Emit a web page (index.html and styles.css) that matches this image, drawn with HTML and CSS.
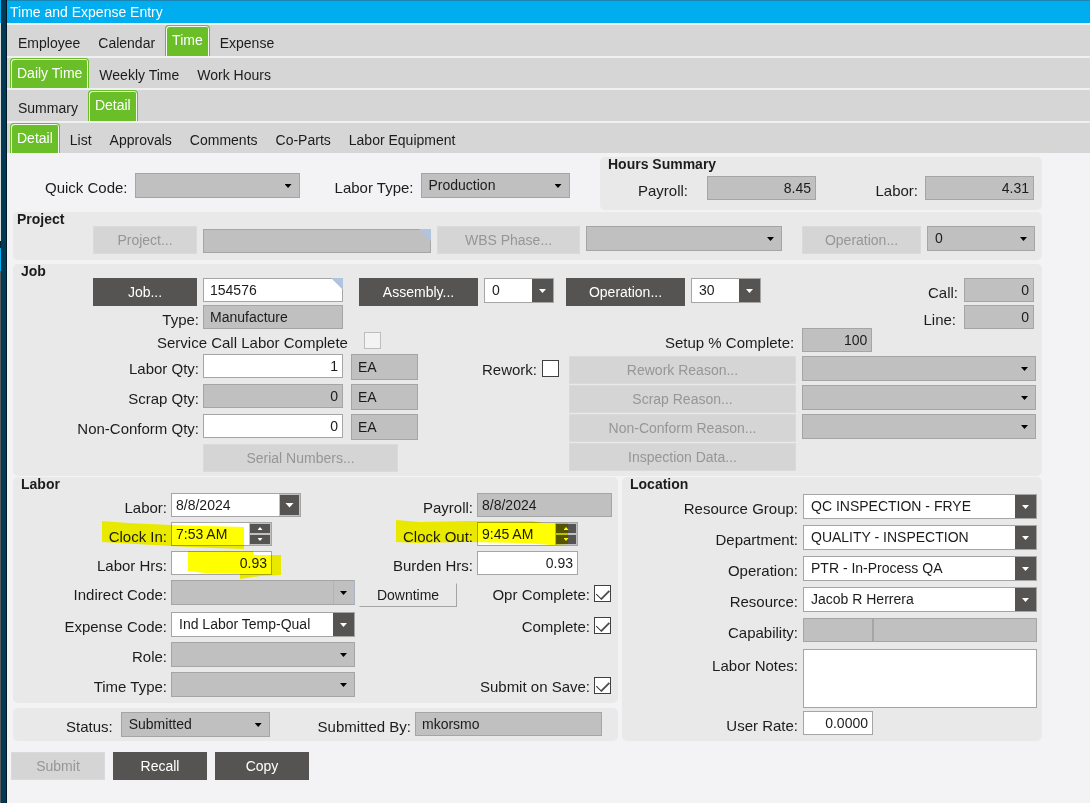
FILE: index.html
```html
<!DOCTYPE html>
<html lang="en">

<head>
    <meta charset="UTF-8">
    <meta name="viewport" content="width=device-width, initial-scale=1.0">
    <title>Time and Expense Entry</title>
    <link rel="stylesheet" href="styles.css">
</head>

<body>
    <div class="edge"></div>
    <div class="window">
        <header class="titlebar">Time and Expense Entry</header>

        <div class="tab-bars">
            <nav class="tabs">
                <button class="tab">Employee</button>
                <button class="tab">Calendar</button>
                <button class="tab active">Time</button>
                <button class="tab">Expense</button>
            </nav>
            <nav class="tabs">
                <button class="tab active">Daily Time</button>
                <button class="tab">Weekly Time</button>
                <button class="tab">Work Hours</button>
            </nav>
            <nav class="tabs">
                <button class="tab">Summary</button>
                <button class="tab active">Detail</button>
            </nav>
            <nav class="tabs">
                <button class="tab active">Detail</button>
                <button class="tab">List</button>
                <button class="tab">Approvals</button>
                <button class="tab">Comments</button>
                <button class="tab">Co-Parts</button>
                <button class="tab">Labor Equipment</button>
            </nav>
        </div>

        <main class="form">
            <!-- Quick code and hours summary -->
            <div class="top-row">
                <div class="quick">
                    <label for="quick-code">Quick Code:</label>
                    <span class="combo w-quick"><select id="quick-code" disabled><option></option></select></span>
                    <label for="labor-type" class="labor-type-label">Labor Type:</label>
                    <span class="combo w-type"><select id="labor-type" disabled><option>Production</option></select></span>
                </div>
                <section class="panel hours">
                    <h2>Hours Summary</h2>
                    <div class="hours-row">
                        <label for="hours-payroll">Payroll:</label>
                        <input type="text" id="hours-payroll" class="num w-hours" value="8.45" readonly>
                        <label for="hours-labor" class="push">Labor:</label>
                        <input type="text" id="hours-labor" class="num w-hours" value="4.31" readonly>
                    </div>
                </section>
            </div>

            <!-- Project -->
            <section class="panel project">
                <h2>Project</h2>
                <div class="project-row">
                    <button class="btn w-btn" disabled>Project...</button>
                    <span class="search grow"><input type="text" aria-label="Project" readonly></span>
                    <button class="btn w-wbs" disabled>WBS Phase...</button>
                    <span class="combo grow wbs-select"><select aria-label="WBS Phase" disabled><option></option></select></span>
                    <button class="btn w-op" disabled>Operation...</button>
                    <span class="combo w-project-op"><select aria-label="Project operation" disabled><option>0</option></select></span>
                </div>
            </section>

            <!-- Job -->
            <section class="panel job">
                <h2>Job</h2>
                <div class="job-row">
                    <button class="btn w-btn">Job...</button>
                    <span class="search w-job"><input type="text" aria-label="Job" value="154576"></span>
                    <button class="btn w-op job-assembly">Assembly...</button>
                    <span class="combo editable w-small"><select aria-label="Assembly"><option>0</option></select></span>
                    <button class="btn w-op job-operation">Operation...</button>
                    <span class="combo editable w-small"><select aria-label="Operation"><option>30</option></select></span>
                    <label for="call" class="push">Call:</label>
                    <input type="text" id="call" class="num w-small" value="0" readonly>
                </div>
                <div class="job-body">
                    <div class="job-left">
                        <div class="qty-row type-row">
                            <label for="job-type">Type:</label>
                            <input type="text" id="job-type" value="Manufacture" readonly>
                        </div>
                        <div class="service-row">
                            <label for="service-complete">Service Call Labor Complete</label>
                            <input type="checkbox" id="service-complete" disabled>
                        </div>
                        <div class="qty-row">
                            <label for="labor-qty">Labor Qty:</label>
                            <input type="text" id="labor-qty" class="num" value="1">
                            <input type="text" aria-label="Labor unit" value="EA" readonly>
                        </div>
                        <div class="qty-row">
                            <label for="scrap-qty">Scrap Qty:</label>
                            <input type="text" id="scrap-qty" class="num" value="0" readonly>
                            <input type="text" aria-label="Scrap unit" value="EA" readonly>
                        </div>
                        <div class="qty-row">
                            <label for="nonconform-qty">Non-Conform Qty:</label>
                            <input type="text" id="nonconform-qty" class="num" value="0">
                            <input type="text" aria-label="Non-conform unit" value="EA" readonly>
                        </div>
                        <button class="btn serial" disabled>Serial Numbers...</button>
                    </div>
                    <div class="rework">
                        <label for="rework">Rework:</label>
                        <input type="checkbox" id="rework">
                    </div>
                    <div class="job-right">
                        <div class="job-extra">
                            <div class="field setup">
                                <label for="setup">Setup % Complete:</label>
                                <input type="text" id="setup" class="num w-small" value="100" readonly>
                            </div>
                            <div class="field">
                                <label for="line">Line:</label>
                                <input type="text" id="line" class="num w-small" value="0" readonly>
                            </div>
                        </div>
                        <div class="reasons">
                            <button class="btn" disabled>Rework Reason...</button>
                            <span class="combo"><select aria-label="Rework reason" disabled><option></option></select></span>
                            <button class="btn" disabled>Scrap Reason...</button>
                            <span class="combo"><select aria-label="Scrap reason" disabled><option></option></select></span>
                            <button class="btn" disabled>Non-Conform Reason...</button>
                            <span class="combo"><select aria-label="Non-conform reason" disabled><option></option></select></span>
                            <button class="btn" disabled>Inspection Data...</button>
                        </div>
                    </div>
                </div>
            </section>

            <div class="bottom">
                <div class="bottom-left">
                    <!-- Labor -->
                    <section class="panel labor">
                        <h2>Labor</h2>
                        <div class="labor-grid">
                            <label for="labor-date">Labor:</label>
                            <div class="cell">
                                <span class="picker w-date">
                                    <input type="text" id="labor-date" value="8/8/2024">
                                    <button class="drop" aria-label="Pick date"></button>
                                </span>
                            </div>
                            <div class="cell">
                                <label for="payroll-date" class="sub-label">Payroll:</label>
                                <input type="text" id="payroll-date" class="grow date" value="8/8/2024" readonly>
                            </div>

                            <label for="clock-in">Clock In:</label>
                            <div class="cell">
                                <span class="picker w-time">
                                    <input type="text" id="clock-in" value="7:53 AM">
                                    <span class="spin">
                                        <button class="up" aria-label="Later"></button>
                                        <button class="down" aria-label="Earlier"></button>
                                    </span>
                                </span>
                            </div>
                            <div class="cell">
                                <label for="clock-out" class="sub-label">Clock Out:</label>
                                <span class="picker w-time">
                                    <input type="text" id="clock-out" value="9:45 AM">
                                    <span class="spin">
                                        <button class="up" aria-label="Later"></button>
                                        <button class="down" aria-label="Earlier"></button>
                                    </span>
                                </span>
                            </div>

                            <label for="labor-hrs">Labor Hrs:</label>
                            <div class="cell"><input type="text" id="labor-hrs" class="num w-time" value="0.93"></div>
                            <div class="cell">
                                <label for="burden-hrs" class="sub-label">Burden Hrs:</label>
                                <input type="text" id="burden-hrs" class="num w-time" value="0.93">
                            </div>

                            <label for="indirect">Indirect Code:</label>
                            <span class="combo hot"><select id="indirect" disabled><option></option></select></span>
                            <div class="cell checks">
                                <button class="downtime">Downtime</button>
                                <label for="opr-complete">Opr Complete:</label>
                                <input type="checkbox" id="opr-complete" checked>
                            </div>

                            <label for="expense">Expense Code:</label>
                            <span class="combo editable"><select id="expense"><option>Ind Labor Temp-Qual</option></select></span>
                            <div class="cell checks">
                                <label for="complete">Complete:</label>
                                <input type="checkbox" id="complete" checked>
                            </div>

                            <label for="role">Role:</label>
                            <span class="combo"><select id="role" disabled><option></option></select></span>
                            <div class="cell"></div>

                            <label for="time-type">Time Type:</label>
                            <span class="combo"><select id="time-type" disabled><option></option></select></span>
                            <div class="cell checks">
                                <label for="submit-save">Submit on Save:</label>
                                <input type="checkbox" id="submit-save" checked>
                            </div>
                        </div>

                        <!-- Marker strokes over the clock fields -->
                        <svg class="marker" width="480" height="66" viewBox="100 516 480 66" aria-hidden="true">
                            <path d="M102 521 L128 523 L171 525 L244 527 L244 549 L213 548 L170 546 L102 542 Z" />
                            <path d="M188 551 H253 L254 555 H281 V575 L260 576 L240 579 V574 L205 573 L188 571 Z" />
                            <path d="M396 520 L420 522 L465 521 L532 521 L543 523 H568 V544 L552 545 L523 543 L468 542 L417 543 L396 542 Z" />
                        </svg>
                    </section>

                    <!-- Status -->
                    <section class="panel status">
                        <label for="status" class="status-label">Status:</label>
                        <span class="combo w-status"><select id="status" disabled><option>Submitted</option></select></span>
                        <label for="submitted-by" class="push">Submitted By:</label>
                        <input type="text" id="submitted-by" class="w-by" value="mkorsmo" readonly>
                    </section>
                </div>

                <!-- Location -->
                <section class="panel location">
                    <h2>Location</h2>
                    <div class="location-grid">
                        <label for="resource-group">Resource Group:</label>
                        <span class="combo editable"><select id="resource-group"><option>QC INSPECTION - FRYE</option></select></span>
                        <label for="department">Department:</label>
                        <span class="combo editable"><select id="department"><option>QUALITY - INSPECTION</option></select></span>
                        <label for="operation">Operation:</label>
                        <span class="combo editable"><select id="operation"><option>PTR - In-Process QA</option></select></span>
                        <label for="resource">Resource:</label>
                        <span class="combo editable"><select id="resource"><option>Jacob R Herrera</option></select></span>
                        <label for="capability">Capability:</label>
                        <div class="cell">
                            <input type="text" id="capability" class="w-small" readonly>
                            <input type="text" aria-label="Capability description" class="grow" readonly>
                        </div>
                        <label for="notes" class="notes-label">Labor Notes:</label>
                        <textarea id="notes"></textarea>
                        <label for="user-rate">User Rate:</label>
                        <input type="text" id="user-rate" class="num w-small" value="0.0000">
                    </div>
                </section>
            </div>

            <div class="actions">
                <button class="btn" disabled>Submit</button>
                <button class="btn">Recall</button>
                <button class="btn">Copy</button>
            </div>
        </main>
    </div>
</body>

</html>
```
FILE: styles.css
```css
* {
    box-sizing: border-box;
}

body {
    margin: 0;
    min-height: 100vh;
    display: flex;
    background-color: #f3f3f5;
    color: #1c1c1c;
    font-family: "Liberation Sans", Arial, sans-serif;
    font-size: 14px;
}

button,
input,
select,
textarea {
    font-family: inherit;
    font-size: 14px;
    color: #1c1c1c;
    margin: 0;
    border-radius: 0;
}

/* Strip of the window behind */
.edge {
    width: 7px;
    flex: none;
    border-right: 1px solid #001824;
    background: linear-gradient(#003a55, #003a55) 1px 0 / 6px 100% no-repeat,
        linear-gradient(#00aeef 23px, #dcdcdc 23px, #dcdcdc 241px, #002233 241px, #002233 248px, #00aeef 248px, #00aeef 271px, #55585a 271px);
}

.window {
    flex: 1;
    min-width: 0;
}

.titlebar {
    height: 23px;
    padding-left: 3px;
    line-height: 22px;
    border-top: 1px solid #1b86b4;
    background-color: #00aeef;
    color: white;
}

/* Tabs */
.tab-bars {
    height: 130px;
    padding-top: 2px;
    display: grid;
    grid-template-rows: repeat(4, 1fr);
    gap: 2px;
    background-color: #f0f0f0;
}

.tabs {
    display: flex;
    align-items: stretch;
    padding-left: 3px;
    background-color: #d6d6d6;
}

.tab {
    border: none;
    background: none;
    padding: 5px 10px 0 8px;
    white-space: nowrap;
}

.tab.active {
    padding: 0 6px 1px;
    margin-right: 2px;
    border: 1px solid #6abe28;
    border-bottom: none;
    border-radius: 4px 4px 0 0;
    box-shadow: inset 1px 1px 0 #f2f8ec, inset -1px 0 0 #f2f8ec;
    background-color: #6abe28;
    color: white;
}

/* Panels */
.form {
    padding: 4px 48px 0 6px;
}

.panel {
    border-radius: 5px;
    background-color: #e9e9e9;
}

.panel h2 {
    margin: 0;
    padding-left: 8px;
    font-size: 14px;
    line-height: 14px;
}

label {
    font-size: 15px;
    line-height: 29px;
    height: 29px;
    white-space: nowrap;
}

.push {
    margin-left: auto;
}

.grow {
    flex: 1;
    min-width: 0;
}

/* Controls */
input[type="text"] {
    height: 24px;
    min-width: 0;
    padding: 0 6px 1px 6px;
    border: 1px solid #a5a5a5;
    background-color: white;
}

input[type="text"]:read-only {
    background-color: #c0c0c0;
}

input.num {
    padding-right: 4px;
    text-align: right;
}

input[type="text"].date {
    padding-left: 4px;
}

input[type="checkbox"] {
    appearance: none;
    width: 17px;
    height: 17px;
    flex: none;
    border: 1px solid #404040;
    background-color: white;
}

input[type="checkbox"]:checked::before {
    content: "";
    display: block;
    width: 11px;
    height: 6px;
    margin: 3px 0 0 2px;
    border-left: 1px solid #303030;
    border-bottom: 2px solid #505050;
    transform: rotate(-45deg);
}

input[type="checkbox"]:disabled {
    border-color: #bdbdbd;
    background-color: #f3f3f3;
}

textarea {
    height: 59px;
    width: 100%;
    border: 1px solid #a5a5a5;
    background-color: white;
    resize: none;
    display: block;
}

.combo {
    position: relative;
    display: block;
    height: 25px;
}

.combo select {
    appearance: none;
    display: block;
    width: 100%;
    height: 25px;
    padding: 0 22px 1px 7px;
    border: 1px solid #a5a5a5;
    background-color: #c0c0c0;
    color: #1c1c1c;
    opacity: 1;
}

.combo::after {
    content: "";
    position: absolute;
    right: 8px;
    top: 11px;
    width: 7px;
    height: 4px;
    background-color: black;
    clip-path: polygon(0 0, 100% 0, 50% 100%);
    pointer-events: none;
}

.combo.editable select {
    background: linear-gradient(to left, #555452 21px, white 21px);
}

.combo.editable::after {
    background-color: white;
}

.combo.hot select {
    background: linear-gradient(to left, #c0c0c0 20px, #a9b4c6 20px, #a9b4c6 21px, #c0c0c0 21px);
    border-right-color: #a9b4c6;
}

.search {
    position: relative;
    display: block;
}

.search input {
    display: block;
    width: 100%;
}

.search::after {
    content: "";
    position: absolute;
    right: 0;
    top: 0;
    width: 12px;
    height: 12px;
    background-color: #b0c4de;
    clip-path: polygon(0 0, 100% 0, 100% 100%);
}

.picker {
    display: flex;
    height: 24px;
    border: 1px solid #a5a5a5;
    background-color: #c0c0c0;
}

.picker input[type="text"] {
    flex: 1;
    height: 22px;
    border: none;
    padding-left: 4px;
}

.drop,
.spin button {
    border: none;
    padding: 0;
    background-color: #555452;
    display: flex;
    align-items: center;
    justify-content: center;
}

.drop {
    width: 19px;
    margin: 1px;
}

.drop::before,
.spin button::before {
    content: "";
    width: 9px;
    height: 5px;
    background-color: white;
    clip-path: polygon(0 0, 100% 0, 50% 100%);
}

.spin {
    width: 20px;
    margin: 1px;
    display: grid;
    gap: 2px;
}

.spin button::before {
    width: 5px;
    height: 3px;
}

.spin .up::before {
    clip-path: polygon(0 100%, 100% 100%, 50% 0);
}

.btn {
    height: 28px;
    padding: 0;
    border: 1px solid #555452;
    background-color: #555452;
    color: white;
}

.btn:disabled {
    border-color: #dadada;
    background-color: #d5d5d5;
    color: #969696;
}

/* Control widths */
.w-btn { width: 104px; }
.w-op { width: 119px; }
.w-wbs { width: 143px; }
.w-small { width: 70px; }
.w-hours { width: 109px; }
.w-quick { width: 165px; }
.w-type { width: 149px; }
.w-status { width: 149px; }
.w-by { width: 187px; }
.w-job { width: 140px; }
.w-project-op { width: 108px; }
.w-date { width: 130px; }
.w-time { width: 101px; }

/* Top row */
.top-row {
    display: flex;
    justify-content: space-between;
}

.quick {
    display: flex;
    padding: 16px 0 0 32px;
    gap: 7px;
}

.labor-type-label {
    margin-left: 28px;
}

.hours {
    width: 442px;
    height: 53px;
}

.hours-row {
    display: flex;
    gap: 7px;
    padding: 5px 8px 0 38px;
}

.hours-row .w-hours:nth-child(2) {
    margin-left: 12px;
}

/* Project */
.project {
    margin-top: 2px;
    padding-bottom: 6px;
}

.project h2 {
    padding-left: 4px;
}

.project-row {
    display: flex;
    padding: 0 7px 0 80px;
    gap: 6px;
}

.project-row .search {
    padding-top: 3px;
    flex-basis: 32px;
}

.project-row .search::after {
    top: 3px;
}

.wbs-select {
    margin-right: 14px;
}

/* Job */
.job {
    margin-top: 4px;
    padding-bottom: 4px;
}

.job-row {
    display: flex;
    height: 27px;
    gap: 6px;
    padding: 0 8px 0 80px;
}

.job-assembly {
    margin-left: 10px;
}

.job-operation {
    margin-left: 6px;
}

.job-body {
    display: flex;
}

.job-left {
    width: 405px;
}

.qty-row {
    display: grid;
    grid-template-columns: 186px 140px 67px;
    column-gap: 4px;
    height: 30px;
}

.qty-row label,
.labor-grid > label,
.location-grid > label,
.sub-label {
    text-align: right;
}

.qty-row input:nth-child(3) {
    height: 26px;
    margin-left: 4px;
    width: 67px;
}

.type-row {
    height: 25px;
}

.service-row {
    height: 24px;
    display: flex;
    gap: 16px;
    padding-left: 144px;
}

.service-row input {
    margin-top: 2px;
}

.service-row label {
    line-height: 25px;
}

.serial {
    display: block;
    width: 195px;
    margin-left: 190px;
}

.rework {
    display: flex;
    gap: 5px;
    width: 151px;
    padding: 50px 0 0 64px;
}

.rework input {
    margin-top: 5px;
}

.job-right {
    flex: 1;
}

.job-extra {
    display: flex;
    justify-content: space-between;
    height: 48px;
    padding-right: 8px;
}

.field {
    display: flex;
    gap: 8px;
}

.setup {
    align-self: flex-end;
    height: 25px;
    padding-left: 96px;
}

.reasons {
    display: grid;
    grid-template-columns: 227px 1fr;
    gap: 1px 6px;
    padding: 3px 6px 0 0;
}

/* Labor, status and location */
.bottom {
    display: flex;
    gap: 4px;
    margin-top: 1px;
}

.bottom-left {
    width: 605px;
    display: flex;
    flex-direction: column;
    gap: 5px;
}

.labor {
    position: relative;
    padding-bottom: 5px;
}

.labor-grid {
    display: grid;
    grid-template-columns: 154px 184px minmax(0, 1fr);
    grid-template-rows: repeat(3, 29px) 32px 30px 30px 26px;
    column-gap: 4px;
    padding: 2px 6px 0 0;
}

.cell {
    display: flex;
}

.sub-label {
    width: 114px;
    margin-right: 4px;
}

.checks {
    justify-content: flex-end;
    gap: 4px;
}

.checks input {
    margin-top: 5px;
    margin-right: 1px;
}

.downtime {
    width: 98px;
    height: 24px;
    margin: 3px auto 0 0;
    padding: 0;
    border: 1px solid #e9e9e9;
    border-right-color: #a5a5a5;
    border-bottom-color: #a5a5a5;
    background-color: #e9e9e9;
}

.marker {
    position: absolute;
    left: 87px;
    top: 39px;
    fill: #ffff00;
    mix-blend-mode: multiply;
    pointer-events: none;
}

.status {
    display: flex;
    height: 33px;
    padding: 4px 16px 0 53px;
    gap: 4px;
}

.status-label {
    margin-right: 4px;
}

.location {
    flex: 1;
    min-width: 0;
}

.location-grid {
    display: grid;
    grid-template-columns: 176px minmax(0, 1fr);
    grid-template-rows: repeat(5, 31px) 62px 24px;
    column-gap: 5px;
    padding: 3px 5px 0 0;
}

.location-grid .notes-label {
    line-height: 34px;
}

.actions {
    display: flex;
    gap: 8px;
    margin: 11px 0 24px -2px;
}

.actions .btn {
    width: 94px;
}
```
